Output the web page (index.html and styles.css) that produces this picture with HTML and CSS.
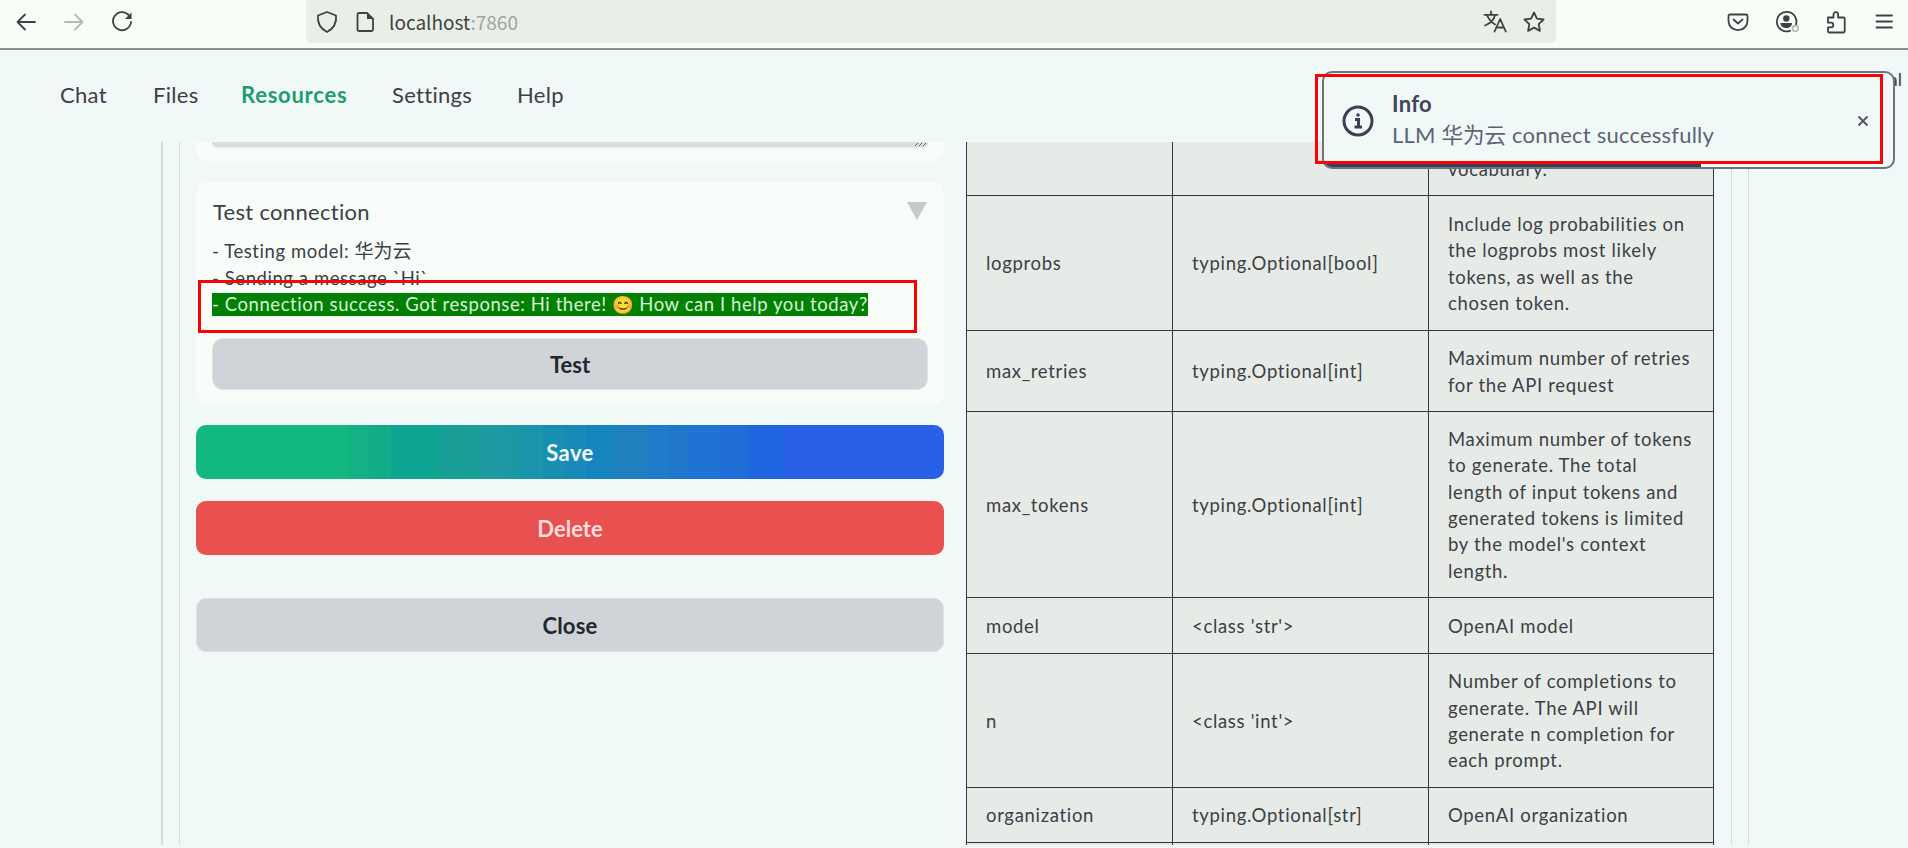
FILE: index.html
```html
<!DOCTYPE html>
<html lang="en">

<head>
    <meta charset="UTF-8">
    <meta name="viewport" content="width=device-width, initial-scale=1.0">
    <title>Resources</title>
    <link rel="stylesheet" href="styles.css">
</head>

<body>
    <header class="toolbar">
        <div class="nav-buttons">
            <svg class="icon" viewBox="0 0 24 24"><path d="M21 12H3.500M11 4.500L3.500 12l7.500 7.500"/></svg>
            <svg class="icon faded" viewBox="0 0 24 24"><path d="M3 12h17.500M13 4.500l7.500 7.500-7.500 7.500"/></svg>
            <svg class="icon" viewBox="0 0 24 24"><path d="M19 5.500A9 9 0 1 0 21 12"/><path class="solid" d="M21.500 2.500v6.500h-6.500z"/></svg>
        </div>
        <div class="url-bar">
            <svg class="icon" viewBox="0 0 24 24"><path d="M12 2l9 3.500c.8 7-1.500 12.500-9 16.500C4.500 18 2.200 12.500 3 5.500z"/></svg>
            <svg class="icon page" viewBox="0 0 24 24"><path d="M6 3h8l6 6v10.500a1.500 1.500 0 0 1-1.500 1.500H6a1.500 1.500 0 0 1-1.500-1.500v-15A1.500 1.500 0 0 1 6 3z"/><path class="solid" d="M14 3v6h6z"/></svg>
            <span class="url">localhost<span class="port">:7860</span></span>
            <svg class="icon translate" viewBox="0 0 24 24"><path d="M1.500 4.800h13M8 1.500v3.300M12 5C11 10 7 13.500 2 15.500M4 5c1.500 4 4 7 8 9.500M11.500 21.500L17.200 9 22.800 21.500M13.500 17.500h7.500"/></svg>
            <svg class="icon" viewBox="0 0 24 24"><path d="M12 2.500l2.900 6.100 6.700.9-4.900 4.600 1.200 6.800-5.900-3.300-5.900 3.300 1.200-6.800L2.400 9.500l6.700-.9z"/></svg>
        </div>
        <div class="tools">
            <svg class="icon" viewBox="0 0 24 24"><path d="M4 4.500h16a1.500 1.500 0 0 1 1.500 1.500v5a9.500 9.200 0 0 1-19 0V6A1.500 1.500 0 0 1 4 4.500zM7.500 9.500l4.500 4 4.500-4"/></svg>
            <svg class="icon" viewBox="0 0 24 24"><path d="M20.800 15A9.800 9.800 0 1 0 15 20.800"/><circle class="solid" cx="11.300" cy="8.500" r="3.200"/><path class="solid" d="M5.500 13h11.500c0 3.500-2.500 5-5.700 5S5.500 16.500 5.500 13z"/><circle class="dot" cx="20.300" cy="18.500" r="2.800"/></svg>
            <svg class="icon" viewBox="0 0 24 24"><path d="M4 7.500h5.500V4.500a2.300 2.300 0 0 1 4.600 0v3h5.400a1.200 1.200 0 0 1 1.200 1.200v12.600a1.200 1.200 0 0 1-1.200 1.200H5.200A1.200 1.200 0 0 1 4 21.300v-4h3a2.300 2.300 0 0 0 0-4.600H4z"/></svg>
            <svg class="icon" viewBox="0 0 24 24"><path d="M3.500 5.500h15.500M3.500 11.500h15.500M3.500 17.500h15.500"/></svg>
        </div>
    </header>

    <nav class="tabs">
        <a class="tab chat">Chat</a>
        <a class="tab files">Files</a>
        <a class="tab active">Resources</a>
        <a class="tab settings">Settings</a>
        <a class="tab">Help</a>
        <span class="user">al</span>
    </nav>

    <main class="panel">
        <div class="inner">
            <section class="form">
                <div class="card spec">
                    <div class="textbox">
                        <svg class="grip" viewBox="0 0 14 5"><path d="M1 4l3-3M5 4l3-3M9 4l3-3"/></svg>
                    </div>
                </div>

                <div class="card test">
                    <div class="card-head">
                        <span class="card-title">Test connection</span>
                        <svg class="arrow" viewBox="0 0 20 18"><path d="M0 0h20L10 18z"/></svg>
                    </div>
                    <div class="log">
                        <p>- Testing model: <span class="zh">华为云</span></p>
                        <p>- Sending a message `Hi`</p>
                        <p><span class="success">- Connection success. Got response: Hi there! <span class="emoji">😊</span> How can I help you today?</span></p>
                    </div>
                    <button class="btn small">Test</button>
                </div>

                <button class="btn save">Save</button>
                <button class="btn delete">Delete</button>
                <button class="btn close">Close</button>
            </section>

            <table class="params">
                <tr class="cut">
                    <td></td>
                    <td></td>
                    <td>vocabulary.</td>
                </tr>
                <tr class="logprobs">
                    <td>logprobs</td>
                    <td>typing.Optional[bool]</td>
                    <td>Include log probabilities on<br>the logprobs most likely<br>tokens, as well as the<br>chosen token.</td>
                </tr>
                <tr class="lines-2">
                    <td>max_retries</td>
                    <td>typing.Optional[int]</td>
                    <td>Maximum number of retries<br>for the API request</td>
                </tr>
                <tr class="lines-6">
                    <td>max_tokens</td>
                    <td>typing.Optional[int]</td>
                    <td>Maximum number of tokens<br>to generate. The total<br>length of input tokens and<br>generated tokens is limited<br>by the model's context<br>length.</td>
                </tr>
                <tr class="lines-1">
                    <td>model</td>
                    <td>&lt;class 'str'&gt;</td>
                    <td>OpenAI model</td>
                </tr>
                <tr class="lines-4">
                    <td>n</td>
                    <td>&lt;class 'int'&gt;</td>
                    <td>Number of completions to<br>generate. The API will<br>generate n completion for<br>each prompt.</td>
                </tr>
                <tr class="organization">
                    <td>organization</td>
                    <td>typing.Optional[str]</td>
                    <td>OpenAI organization</td>
                </tr>
                <tr class="lines-1">
                    <td></td>
                    <td></td>
                    <td></td>
                </tr>
            </table>
        </div>
    </main>

    <div class="toast">
        <svg class="info" viewBox="0 0 32 32"><circle cx="16" cy="16" r="14"/><path d="M13 14.500h3.500V22M12.500 22h7.500"/><circle class="solid" cx="16" cy="10" r="1.800"/></svg>
        <div class="toast-text">
            <div class="toast-title">Info</div>
            <div class="toast-msg">LLM <span class="zh">华为云</span> connect successfully</div>
        </div>
        <svg class="dismiss" viewBox="0 0 12 12"><path d="M1.500 1.500l9 9M10.500 1.500l-9 9"/></svg>
        <div class="timer"></div>
    </div>

    <div class="mark mark-toast"></div>
    <div class="mark mark-log"></div>
</body>

</html>
```

FILE: styles.css
```css
* {
    box-sizing: border-box;
}

body {
    margin: 0;
    height: 848px;
    overflow: hidden;
    background: #f0f8f8;
    color: #3c4046;
    font-family: Lato, "Noto Sans CJK SC", sans-serif;
    position: relative;
}

/* browser toolbar */
.toolbar {
    display: flex;
    height: 50px;
    background: #f8fdf8;
    border-bottom: 2px solid #8b918c;
}

.icon {
    width: 24px;
    height: 24px;
    flex: none;
    fill: none;
    stroke: #3f433f;
    stroke-width: 1.8;
    stroke-linejoin: round;
    stroke-linecap: round;
}

.icon .solid {
    fill: #3f433f;
    stroke: none;
}

.icon .dot {
    stroke: #b5b9b5;
    fill: #f8fdf8;
}

.faded {
    stroke: #b5bab5;
}

.nav-buttons {
    display: flex;
    gap: 24px;
    width: 306px;
    padding: 10px 0 0 14px;
}

.url-bar {
    display: flex;
    align-items: center;
    width: 1250px;
    height: 43px;
    padding: 0 10px 0 9px;
    background: #e8efe7;
    border-radius: 0 0 5px 5px;
}

.page {
    margin-left: 14px;
}

.url {
    margin-left: 12px;
    font-family: "Noto Sans CJK SC", sans-serif;
    font-size: 19px;
    line-height: 30px;
    color: #3f433f;
}

.port {
    color: #a0a5a0;
}

.translate {
    margin-left: auto;
    margin-right: 15px;
}

.tools {
    display: flex;
    gap: 25px;
    padding: 10px 0 0 170px;
}

/* app navigation */
.tabs {
    display: flex;
    align-items: flex-start;
    height: 92px;
    padding: 30px 0 0 60px;
    font-size: 22px;
    line-height: 30px;
    white-space: nowrap;
}

.tab {
    letter-spacing: 0.3px;
}

.chat {
    width: 93px;
}

.files {
    width: 88px;
}

.active {
    width: 151px;
    color: #1d9e6e;
    font-weight: bold;
    letter-spacing: 0.75px;
}

.settings {
    width: 125px;
}

.user {
    margin: -16px 6px 0 auto;
    font-size: 18px;
}

/* content */
.panel {
    height: 703px;
    margin: 0 159px 0 161px;
    border: solid #d5dcdc;
    border-width: 0 1px 0 2px;
    overflow: hidden;
}

.inner {
    display: flex;
    justify-content: space-between;
    height: 703px;
    margin: 0 16px;
    padding: 0 17px 0 16px;
    border: solid #d5dcdc;
    border-width: 0 1px 0 1px;
}

.form {
    width: 748px;
}

.card {
    background: #f8fdf9;
    border-radius: 10px;
    padding: 0 16px;
}

.spec {
    height: 19px;
    border-radius: 0 0 10px 10px;
}

.textbox {
    display: flex;
    justify-content: flex-end;
    height: 5px;
    background: #d8e0e0;
    border-radius: 0 0 8px 8px;
    box-shadow: 0 1px 2px #e4eae4;
}

.grip {
    width: 14px;
    height: 5px;
    fill: none;
    stroke: #666;
}

.test {
    height: 222px;
    margin-top: 21px;
    padding-top: 15px;
}

.card-head {
    display: flex;
    justify-content: space-between;
    align-items: center;
    height: 28px;
    padding: 0 1px;
}

.card-title {
    font-size: 22px;
    letter-spacing: 0.3px;
}

.arrow {
    width: 20px;
    height: 18px;
    fill: #c6cbc7;
}

.log {
    height: 113px;
    padding-top: 13px;
    font-size: 18.5px;
    letter-spacing: 0.57px;
    white-space: nowrap;
}

.log p {
    margin: 0;
    height: 26.5px;
    line-height: 26px;
}

.zh {
    font-size: 19px;
    letter-spacing: 0;
}

.success {
    display: inline-block;
    height: 23px;
    line-height: 23px;
    background: #008000;
    color: #d8f0d8;
}

.emoji {
    font-family: "Noto Color Emoji", sans-serif;
    font-size: 17.5px;
    letter-spacing: 0;
}

.btn {
    display: block;
    width: 100%;
    height: 54px;
    padding: 0;
    border: 1px solid #dde1e4;
    border-radius: 10px;
    background: #d0d3d8;
    color: #24272c;
    font-family: inherit;
    font-size: 22px;
    font-weight: bold;
}

.small {
    height: 52px;
    border-radius: 11px;
}

.save {
    margin-top: 21px;
    border: 0;
    background: linear-gradient(90deg,
            #12b880 153px, #13b184 153px 173px, #12ac88 173px 195px,
            #10a492 195px 225px, #10a492 245px, #1a9f98 245px 283px,
            #1d9aa2 283px 305px, #1a97a6 326px, #1a95ab 326px 347px,
            #168fb0 347px 368px, #1889b8 368px 390px, #1785bd 390px 418px,
            #2080bf 418px 452px, #207bcb 452px 473px, #1f76cb 473px 492px,
            #2173d3 492px 523px, #206dd8 523px 553px, #2066e0 553px 587px,
            #2860e8 587px);
    color: #f3faf8;
    letter-spacing: 0.4px;
}

.delete {
    margin-top: 22px;
    border: 0;
    background: #e95050;
    color: #fbdede;
}

.close {
    margin-top: 43px;
    letter-spacing: 0.2px;
}

.params {
    width: 748px;
    height: 0;
    table-layout: fixed;
    border-collapse: collapse;
    background: #e7ebe7;
    font-size: 18.5px;
    line-height: 26.3px;
    letter-spacing: 0.68px;
    white-space: nowrap;
}

.params td {
    border: 1px solid #34373d;
    padding: 2px 0 0 19px;
}

.params td:nth-child(1) {
    width: 206px;
}

.params td:nth-child(2) {
    width: 256px;
}

.params .cut td {
    height: 53px;
    padding-bottom: 12px;
    vertical-align: bottom;
    border-top: 0;
}

.lines-1 td {
    height: 56px;
}

.organization td {
    height: 55px;
}

.lines-2 td {
    height: 81px;
}

.logprobs td {
    height: 135px;
}

.lines-4 td {
    height: 134px;
}

.lines-6 td {
    height: 186px;
}

/* notification */
.toast {
    position: absolute;
    left: 1322px;
    top: 71px;
    display: flex;
    align-items: center;
    width: 573px;
    height: 98px;
    padding: 2px 24px 0 18px;
    border: 2px solid #6b7280;
    border-radius: 10px;
    background: #f0f8f8;
    color: #3e4658;
    overflow: hidden;
}

.info {
    width: 32px;
    height: 32px;
    margin-right: 18px;
    fill: none;
    stroke: #374151;
    stroke-width: 3;
}

.info .solid {
    fill: #374151;
    stroke: none;
}

.toast-text {
    flex: 1;
    margin-top: -3px;
    font-size: 22px;
    line-height: 31px;
    white-space: nowrap;
}

.toast-title {
    letter-spacing: 0.3px;
    font-weight: bold;
}

.toast-msg {
    color: #5b6475;
    letter-spacing: 0.22px;
}

.toast-msg .zh {
    font-size: 21.5px;
}

.dismiss {
    width: 12px;
    height: 12px;
    fill: none;
    stroke: #4b5563;
    stroke-width: 1.8;
}

.timer {
    position: absolute;
    left: 0;
    bottom: 0;
    width: 377px;
    height: 5px;
    background: #374151;
}

/* highlight frames */
.mark {
    position: absolute;
    border: 3px solid #ff0000;
}

.mark-toast {
    left: 1315px;
    top: 74px;
    width: 568px;
    height: 90px;
}

.mark-log {
    left: 198px;
    top: 280px;
    width: 719px;
    height: 53px;
}
```
